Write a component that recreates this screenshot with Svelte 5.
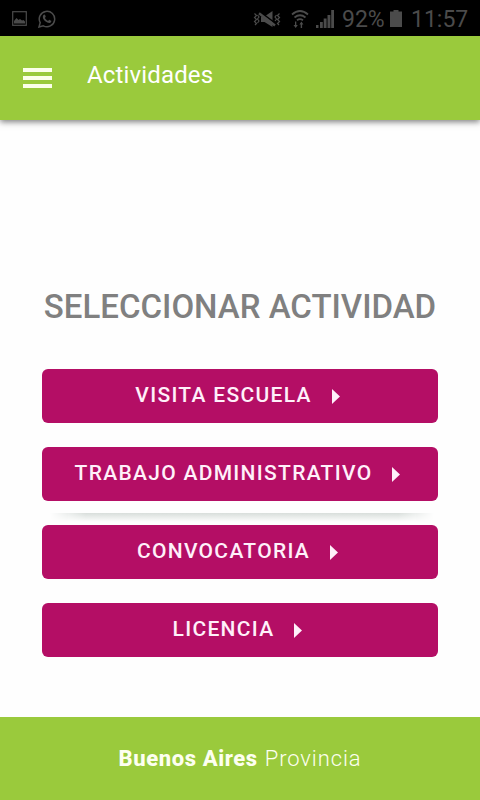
<script lang="ts">
	const battery = '92%';
	const clock = '11:57';

	const activities = ['Visita escuela', 'Trabajo administrativo', 'Convocatoria', 'Licencia'];
</script>

<div class="screen">
	<div class="status">
		<svg class="picture" viewBox="0 0 15 15" width="15" height="15">
			<rect x="0.7" y="0.7" width="13.6" height="13.6" fill="none" stroke="currentColor" stroke-width="1.2" />
			<path d="M2 12.500V10L4.500 7l2 2 1.500-1 2 1.500 1.500-.5L13 10.500v2z" fill="currentColor" />
		</svg>
		<svg class="chat" viewBox="0 0 18 18" width="18" height="18">
			<path d="M1 17l1.200-4.300A7.700 7.700 0 1 1 5.300 15.800z" fill="none" stroke="currentColor" stroke-width="1.5" />
			<path d="M5.300 5.200c.8-1 1.600-.8 1.900 0l.5 1.300c.1.500-.5 1-.8 1.400.8 1.500 1.900 2.400 3.300 3 .4-.4.800-1.200 1.300-1l1.700.9c.4.300-.1 1.500-.8 1.900-1.400.8-3.300 0-4.700-1.100C5.700 10 4 7.300 5.300 5.200z" fill="currentColor" />
		</svg>
		<svg class="mute" viewBox="0 0 28 18" width="28" height="18">
			<path d="M1.500 3.500l2 2-2 2 2 2-2 2 2 2-1.500 1.500M4.500 5l1.500 2-1.500 2L6 11l-1.500 2M26.500 3.500l-2 2 2 2-2 2 2 2-2 2 1.500 1.500M23.500 5L22 7l1.500 2-1.500 2" fill="none" stroke="currentColor" stroke-width="1.200" />
			<path d="M8 6.500h3.500L19.500 1v16l-8-5H8z" fill="currentColor" />
			<path d="M7 1.800L22.500 13.500" stroke="#000" stroke-width="1.600" />
			<path d="M6 3.200L22 15.500" stroke="currentColor" stroke-width="2.400" />
		</svg>
		<svg class="wifi" viewBox="0 0 18 20" width="18" height="20">
			<path d="M1 5.500Q9-1.500 17 5.500M3.500 8.500Q9 4 14.500 8.500M6 11.200Q9 9 12 11.200" fill="none" stroke="currentColor" stroke-width="1.700" />
			<path d="M5.300 12.500v3.500h1.500L4.700 19 2.500 16H4v-3.500zM9.700 19v-3.500H8.400l2-3 2 3h-1.300V19z" fill="currentColor" />
		</svg>
		<svg class="signal" viewBox="0 0 18 18" width="18" height="18">
			<path d="M0 15h2.500v3H0zM4 12h2.800v6H4zM7.700 8.500h2.900V18H7.700zM11.500 5h2.900v13h-2.900zM15.200 0H18v18h-2.800z" fill="currentColor" />
		</svg>
		<span class="battery">{battery}</span>
		<svg class="cell" viewBox="0 0 12 17" width="12" height="17">
			<path d="M3.500 0h5v1.500H12V17H0V1.500h3.500z" fill="currentColor" />
		</svg>
		<span class="clock">{clock}</span>
	</div>

	<header>
		<button class="menu" aria-label="Menú">
			<span></span>
			<span></span>
			<span></span>
		</button>
		<div class="title">Actividades</div>
	</header>

	<main>
		<h1>Seleccionar actividad</h1>
		<div class="list">
			{#each activities as activity, i}
				<button class="activity" class:glow={i === 1}>
					<span>{activity}</span>
					<svg viewBox="0 0 8 15" width="8" height="15">
						<path d="M0 0L8 7.500 0 15z" fill="currentColor" />
					</svg>
				</button>
			{/each}
		</div>
	</main>

	<footer>
		<b>Buenos Aires</b>
		<span>Provincia</span>
	</footer>
</div>

<style>
	:global(body) {
		margin: 0;
		background: #fefefe;
	}

	.screen {
		display: flex;
		flex-direction: column;
		width: 480px;
		height: 800px;
		overflow: hidden;
		font-family: Roboto, sans-serif;
	}

	button {
		border: 0;
		padding: 0;
		font-family: inherit;
		cursor: pointer;
	}

	svg {
		flex: none;
	}

	.status {
		display: flex;
		align-items: center;
		box-sizing: border-box;
		height: 36px;
		padding: 1px 12px 0;
		background: #000;
		color: #4b4b4b;
	}

	.chat {
		margin-left: 11px;
	}

	.mute {
		margin: 0 10px 0 auto;
	}

	.signal {
		margin: 0 8px 0 7px;
	}

	.battery,
	.clock {
		padding-top: 2px;
		font-size: 23px;
		line-height: 34px;
		white-space: nowrap;
	}

	.battery {
		width: 42px;
	}

	.cell {
		margin: 0 9px 0 6px;
	}

	.clock {
		width: 57px;
	}

	header {
		display: flex;
		align-items: center;
		flex: none;
		height: 84px;
		background: #9aca3c;
		color: #fff;
		box-shadow: 0 2px 6px rgba(0, 0, 0, 0.5);
	}

	.menu {
		display: flex;
		flex-direction: column;
		gap: 4px;
		width: 29px;
		margin: 0 35px 0 23px;
		background: none;
	}

	.menu span {
		height: 4px;
		background: #fbffe9;
	}

	.title {
		padding-bottom: 7px;
		font-size: 24px;
		letter-spacing: 0.15px;
	}

	main {
		flex: 1;
		padding: 163px 42px 0;
	}

	h1 {
		margin: 0 -20px;
		font-size: 33px;
		font-weight: 500;
		line-height: 48px;
		text-align: center;
		text-transform: uppercase;
		white-space: nowrap;
		color: #808080;
	}

	.list {
		display: flex;
		flex-direction: column;
		gap: 24px;
		margin-top: 38px;
	}

	.activity {
		position: relative;
		display: flex;
		align-items: center;
		justify-content: center;
		gap: 20px;
		box-sizing: border-box;
		height: 54px;
		padding-right: 5px;
		border-radius: 6px;
		background: #b40e65;
		color: #fff0fa;
		font-size: 21px;
		font-weight: 500;
		letter-spacing: 1.3px;
		text-transform: uppercase;
	}

	.activity span {
		padding-bottom: 2px;
	}

	/* soft line under the pressed item */
	.glow::after {
		content: '';
		position: absolute;
		top: 66px;
		left: 8px;
		right: 4px;
		height: 9px;
		background: linear-gradient(#d8dedb, #fefefe);
		mask-image: linear-gradient(90deg, transparent, #000 36px, #000 calc(100% - 36px), transparent);
	}

	footer {
		display: flex;
		align-items: center;
		justify-content: center;
		gap: 7px;
		flex: none;
		height: 83px;
		padding-bottom: 1px;
		box-sizing: border-box;
		background: #9aca3c;
		color: #fdfff0;
		font-size: 22px;
	}

	footer b {
		font-weight: 800;
		letter-spacing: 0.6px;
	}

	footer span {
		font-weight: 300;
		letter-spacing: 0.9px;
	}
</style>
